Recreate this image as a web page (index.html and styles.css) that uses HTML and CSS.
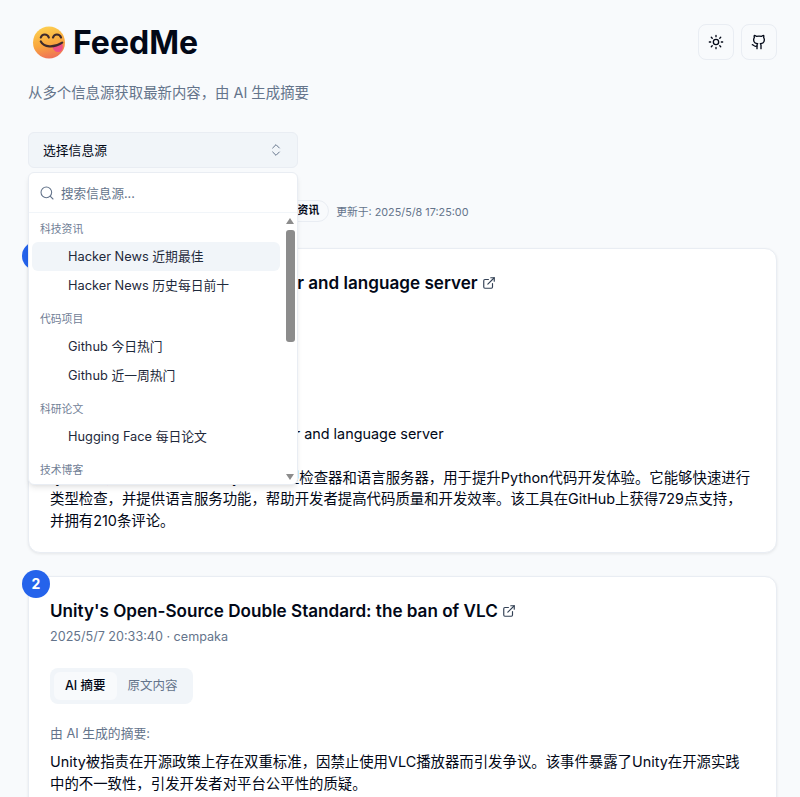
FILE: index.html
```html
<!DOCTYPE html>
<html lang="zh-CN">
<head>
<meta charset="UTF-8">
<title>FeedMe</title>
<link rel="stylesheet" href="styles.css">
</head>
<body>

<div class="page">

	<header class="header">
		<h1 class="logo">
			<svg class="logo-emoji" viewBox="0 0 34 34">
				<defs>
					<linearGradient id="face" x1="0.35" y1="0" x2="0.6" y2="1">
						<stop offset="0" stop-color="#fdcf50"/>
						<stop offset="0.55" stop-color="#f9a63e"/>
						<stop offset="1" stop-color="#ee6e58"/>
					</linearGradient>
				</defs>
				<circle cx="17" cy="16.5" r="16" fill="url(#face)"/>
				<path d="M8.8 11.5c1.2-4 6.6-4 8 0" fill="none" stroke="#3f2a2c" stroke-width="2.2" stroke-linecap="round"/>
				<path d="M21 11.5c1.2-4 6.6-4 8 0" fill="none" stroke="#3f2a2c" stroke-width="2.2" stroke-linecap="round"/>
				<path d="M20.5 20.5l9.5-3.5c1.6 4 .9 7.6-2.2 8.8-3.6 1.2-6.7-1.4-7.3-5.3z" fill="#ee4f86"/>
				<path d="M8.8 15.5c3 5.6 12.5 7 21.4 1.2" fill="none" stroke="#3f2a2c" stroke-width="2.2" stroke-linecap="round"/>
			</svg>
			FeedMe
		</h1>
		<div class="header-btns">
			<button class="icon-btn" type="button">
				<svg class="icon" viewBox="0 0 24 24"><circle cx="12" cy="12" r="4"/><path d="M12 2v2M12 20v2M4.93 4.93l1.41 1.41M17.66 17.66l1.41 1.41M2 12h2M20 12h2M6.34 17.66l-1.41 1.41M19.07 4.93l-1.41 1.41"/></svg>
			</button>
			<button class="icon-btn" type="button">
				<svg class="icon" viewBox="0 0 24 24"><path d="M15 22v-4a4.8 4.8 0 0 0-1-3.5c3 0 6-2 6-5.5.08-1.25-.27-2.48-1-3.5.28-1.15.28-2.35 0-3.5 0 0-1 0-3 1.5-2.64-.5-5.36-.5-8 0C6 2 5 2 5 2c-.3 1.15-.3 2.35 0 3.5A5.403 5.403 0 0 0 4 9c0 3.5 3 5.5 6 5.5-.39.49-.68 1.05-.85 1.65-.17.6-.22 1.23-.15 1.85v4"/><path d="M9 18c-4.51 2-5-2-7-2"/></svg>
			</button>
		</div>
	</header>

	<p class="subtitle">从多个信息源获取最新内容，由 AI 生成摘要</p>

	<div class="select-wrap">
		<button class="select-btn" type="button">
			选择信息源
			<svg class="icon chevrons" viewBox="0 0 24 24"><path d="m7 15 5 5 5-5"/><path d="m7 9 5-5 5 5"/></svg>
		</button>

		<div class="popover">
			<div class="search">
				<svg class="icon search-icon" viewBox="0 0 24 24"><circle cx="11" cy="11" r="8"/><path d="m21 21-4.3-4.3"/></svg>
				搜索信息源...
			</div>
			<div class="list">
				<div class="group">
					<div class="group-name">科技资讯</div>
					<div class="item active">Hacker News 近期最佳</div>
					<div class="item">Hacker News 历史每日前十</div>
				</div>
				<div class="group">
					<div class="group-name">代码项目</div>
					<div class="item">Github 今日热门</div>
					<div class="item">Github 近一周热门</div>
				</div>
				<div class="group">
					<div class="group-name">科研论文</div>
					<div class="item">Hugging Face 每日论文</div>
				</div>
				<div class="group">
					<div class="group-name">技术博客</div>
				</div>
			</div>
			<div class="scrollbar">
				<span class="arrow-up"></span>
				<span class="thumb"></span>
				<span class="arrow-down"></span>
			</div>
		</div>
	</div>

	<div class="meta-row">
		<span class="pill pill-source">Hacker News 近期最佳</span>
		<span class="pill">科技资讯</span>
		<span class="updated">更新于: 2025/5/8 17:25:00</span>
	</div>

	<article class="card">
		<span class="num">1</span>
		<h2 class="card-title">Ty: A fast Python type checker and language server
			<svg class="icon ext" viewBox="0 0 24 24"><path d="M15 3h6v6"/><path d="M10 14 21 3"/><path d="M18 13v6a2 2 0 0 1-2 2H5a2 2 0 0 1-2-2V8a2 2 0 0 1 2-2h6"/></svg>
		</h2>
		<div class="card-meta">2025/5/7 22:12:08 · kanbara</div>
		<div class="tabs">
			<span class="tab on">AI 摘要</span>
			<span class="tab">原文内容</span>
		</div>
		<div class="ai-label">由 AI 生成的摘要:</div>
		<p class="para">Ty: A really fast Python type checker and language server</p>
		<p class="para">ty是一款用Rust编写的极速Python类型检查器和语言服务器，用于提升Python代码开发体验。它能够快速进行类型检查，并提供语言服务功能，帮助开发者提高代码质量和开发效率。该工具在GitHub上获得729点支持，并拥有210条评论。</p>
	</article>

	<article class="card">
		<span class="num">2</span>
		<h2 class="card-title">Unity's Open-Source Double Standard: the ban of VLC
			<svg class="icon ext" viewBox="0 0 24 24"><path d="M15 3h6v6"/><path d="M10 14 21 3"/><path d="M18 13v6a2 2 0 0 1-2 2H5a2 2 0 0 1-2-2V8a2 2 0 0 1 2-2h6"/></svg>
		</h2>
		<div class="card-meta">2025/5/7 20:33:40 · cempaka</div>
		<div class="tabs">
			<span class="tab on">AI 摘要</span>
			<span class="tab">原文内容</span>
		</div>
		<div class="ai-label">由 AI 生成的摘要:</div>
		<p class="para">Unity被指责在开源政策上存在双重标准，因禁止使用VLC播放器而引发争议。该事件暴露了Unity在开源实践中的不一致性，引发开发者对平台公平性的质疑。</p>
	</article>

</div>

</body>
</html>
```

FILE: styles.css
```css
html, body {
	height: 100%;
	margin: 0;
	overflow: hidden;
}

body {
	background: #f8fafc;
	color: #020817;
	font-family: Inter, "Noto Sans CJK SC", sans-serif;
}

.page {
	padding: 24px 23px 0 28px;
}

.header {
	display: flex;
	justify-content: space-between;
	align-items: flex-start;
}

.logo {
	display: flex;
	align-items: center;
	gap: 7px;
	height: 38px;
	margin: 0 0 0 4px;
	font-size: 32px;
	font-weight: 700;
	line-height: 38px;
}

.logo-emoji {
	width: 34px;
	height: 34px;
}

.header-btns {
	display: flex;
	gap: 7px;
}

.icon-btn {
	display: flex;
	align-items: center;
	justify-content: center;
	width: 36px;
	height: 36px;
	padding: 0;
	background: #f8fafc;
	border: 1px solid #e9edf3;
	border-radius: 8px;
	color: #020817;
}

.icon {
	width: 16px;
	height: 16px;
	fill: none;
	stroke: currentColor;
	stroke-width: 2;
	stroke-linecap: round;
	stroke-linejoin: round;
}

.subtitle {
	margin: 21px 0 0;
	color: #64748b;
	font-size: 14.4px;
	line-height: 20px;
}

.select-wrap {
	position: relative;
	width: 270px;
	margin-top: 29px;
}

.select-btn {
	display: flex;
	align-items: center;
	justify-content: space-between;
	box-sizing: border-box;
	width: 100%;
	height: 36px;
	padding: 0 13px 2px 14px;
	background: #f1f5f9;
	border: 1px solid #e9edf3;
	border-radius: 6px;
	color: #020817;
	font-family: inherit;
	font-size: 12.8px;
}

.chevrons {
	margin-top: 2px;
	stroke-width: 1.5;
	color: #64748b;
}

.popover {
	position: absolute;
	top: 40px;
	left: 0;
	z-index: 5;
	box-sizing: border-box;
	width: 270px;
	height: 313px;
	overflow: hidden;
	background: #fff;
	border: 1px solid #e9edf3;
	border-radius: 6px;
	box-shadow: 0 4px 6px -1px rgba(0,0,0,.08), 0 2px 4px -2px rgba(0,0,0,.08);
}

.search {
	display: flex;
	align-items: center;
	gap: 6px;
	height: 39px;
	padding: 0 10px;
	border-bottom: 1px solid #f1f5f9;
	color: #64748b;
	font-size: 12.6px;
}

.search-icon {
	stroke-width: 1.6;
}

.list {
	padding: 2px 3px;
}

.group {
	margin-bottom: 5px;
}

.group-name {
	height: 27px;
	padding-left: 8px;
	color: #718096;
	font-size: 10.8px;
	line-height: 29px;
}

.item {
	width: 248px;
	height: 29px;
	padding-left: 36px;
	box-sizing: border-box;
	border-radius: 6px;
	color: #1e293b;
	font-size: 12.8px;
	line-height: 29px;
}

.item.active {
	background: #f1f5f9;
}

/* scrollbar of the list */
.scrollbar {
	position: absolute;
	top: 41px;
	right: 1px;
	bottom: 0;
	width: 10px;
}

.arrow-up, .arrow-down {
	position: absolute;
	left: 0;
	width: 0;
	height: 0;
	border-left: 4.5px solid transparent;
	border-right: 4.5px solid transparent;
}

.arrow-up {
	top: 4px;
	border-bottom: 6px solid #8c8c8c;
}

.arrow-down {
	bottom: 4px;
	border-top: 6px solid #8c8c8c;
}

.thumb {
	position: absolute;
	top: 16px;
	left: 0;
	width: 9px;
	height: 112px;
	background: #8c8c8c;
	border-radius: 3px;
}

.meta-row {
	display: flex;
	align-items: center;
	gap: 7px;
	height: 22px;
	margin: 32px 0 26px;
}

.pill {
	padding: 0 9px;
	background: #f8fafc;
	border: 1px solid #e9edf3;
	border-radius: 11px;
	font-size: 10.8px;
	font-weight: 600;
	line-height: 20px;
}

.pill-source {
	width: 211px;
}

.updated {
	color: #64748b;
	font-size: 10.8px;
}

.card {
	position: relative;
	margin: 0 0 23px;
	padding: 20px 23px 21px 21px;
	background: #fff;
	border: 1px solid #e9edf3;
	border-radius: 12px;
	box-shadow: 0 1px 3px rgba(0,0,0,.08);
}

.num {
	position: absolute;
	top: -7px;
	left: -7px;
	width: 28px;
	height: 28px;
	background: #2563eb;
	border-radius: 50%;
	color: #fff;
	font-size: 14px;
	font-weight: 700;
	line-height: 28px;
	text-align: center;
}

.card-title {
	margin: 0;
	font-size: 17.1px;
	font-weight: 600;
	line-height: 28px;
}

.ext {
	width: 14px;
	height: 14px;
	vertical-align: -1px;
	color: #334155;
}

.card-meta {
	margin-top: 2px;
	color: #64748b;
	font-size: 12.6px;
	line-height: 20px;
}

.tabs {
	display: inline-flex;
	margin-top: 21px;
	padding: 4px;
	background: #f1f5f9;
	border-radius: 8px;
	vertical-align: top;
}

.tab {
	height: 28px;
	padding: 0 11px;
	border-radius: 6px;
	color: #64748b;
	font-size: 12.5px;
	line-height: 28px;
}

.tab.on {
	background: #f8fafc;
	color: #020817;
	font-weight: 500;
}

.ai-label {
	margin: 20px 0 7px;
	color: #64748b;
	font-size: 12.8px;
	line-height: 20px;
}

.para {
	margin: 0 0 22px;
	font-size: 14.4px;
	line-height: 21.6px;
}

.para:last-child {
	margin-bottom: 0;
}
```
